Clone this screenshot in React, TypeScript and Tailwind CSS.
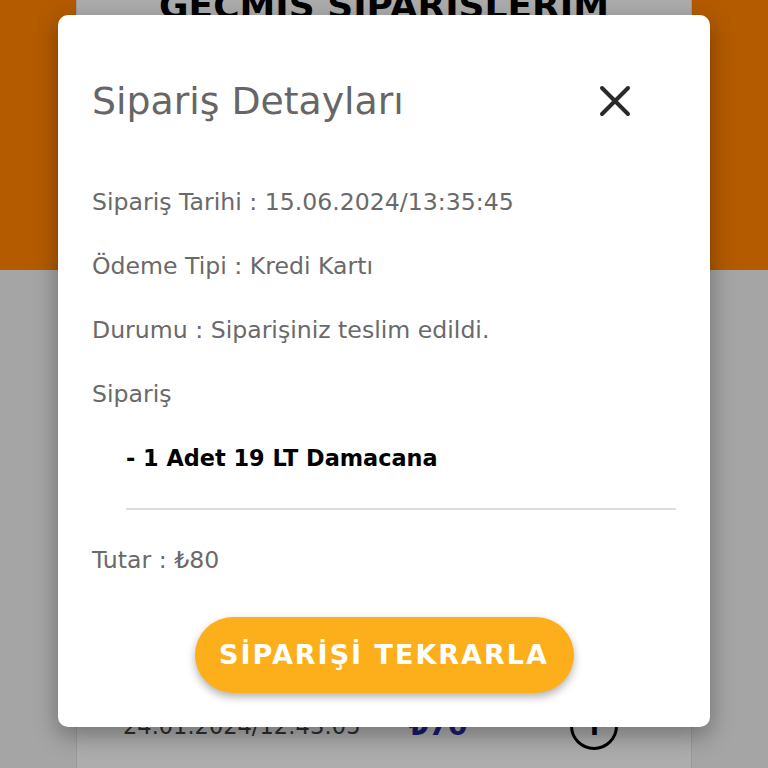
import React from "react";

const font = { fontFamily: '"DejaVu Sans", "Noto Sans", sans-serif' };

export default function App() {
  return (
    <div
      className="relative h-[768px] w-[768px] overflow-hidden bg-[linear-gradient(to_bottom,#b45b00_270px,#a5a5a5_270px)]"
      style={font}
    >
      {/* background page card */}
      <div className="mx-[76px] flex h-[820px] w-[616px] -mt-[14px] flex-col bg-[#adadad] border-x border-[#9a9a9a]">
        <div className="text-center text-[36px] font-bold leading-[40px] text-black">
          GEÇMİŞ SİPARİŞLERİM
        </div>
        <div className="mt-[676px] flex items-center pl-[46px]">
          <span className="w-[240px] text-[22.5px] leading-[30px] text-[#2e2e2e]">24.01.2024/12:43:05</span>
          <span className="ml-[46px] text-[28px] font-bold leading-[30px] text-[#1b1b6e]">₺70</span>
          <span className="ml-[103px] flex h-[48px] w-[48px] items-center justify-center rounded-full border-[3px] border-black text-[26px] font-bold text-black">
            i
          </span>
        </div>
      </div>

      {/* modal */}
      <div className="absolute left-[58px] top-[15px] flex h-[712px] w-[652px] flex-col rounded-[10px] bg-white px-[34px] shadow-[0_8px_24px_rgba(0,0,0,0.35)]">
        <div className="mt-[66px] flex items-center justify-between">
          <h2 className="text-[37.8px] leading-[40px] text-[#666]">Sipariş Detayları</h2>
          <svg width="32" height="32" viewBox="0 0 32 32" className="mr-[45px]">
            <path d="M3 3 L29 29 M29 3 L3 29" stroke="#2a2a2a" strokeWidth="4" strokeLinecap="round" />
          </svg>
        </div>
        <div className="mt-[65px] flex flex-col gap-[32px] text-[23.6px] leading-[32px] text-[#6a6a6a]">
          <div>Sipariş Tarihi : 15.06.2024/13:35:45</div>
          <div>Ödeme Tipi : Kredi Kartı</div>
          <div>Durumu : Siparişiniz teslim edildi.</div>
          <div>Sipariş</div>
        </div>
        <div className="ml-[34px] mt-[32px] text-[22.4px] font-bold leading-[32px] text-black">
          - 1 Adet 19 LT Damacana
        </div>
        <div className="ml-[34px] mt-[34px] h-[2px] bg-[#dcdcdc]" />
        <div className="mt-[34px] text-[23.6px] leading-[32px] text-[#6a6a6a]">Tutar : ₺80</div>
        <div className="mt-[41px] flex justify-center">
          <button className="h-[76px] w-[379px] rounded-full bg-[#fcaf1b] text-[27px] font-bold tracking-[2px] text-white shadow-[0_4px_8px_rgba(0,0,0,0.3)]">
            SİPARİŞİ TEKRARLA
          </button>
        </div>
      </div>
    </div>
  );
}
